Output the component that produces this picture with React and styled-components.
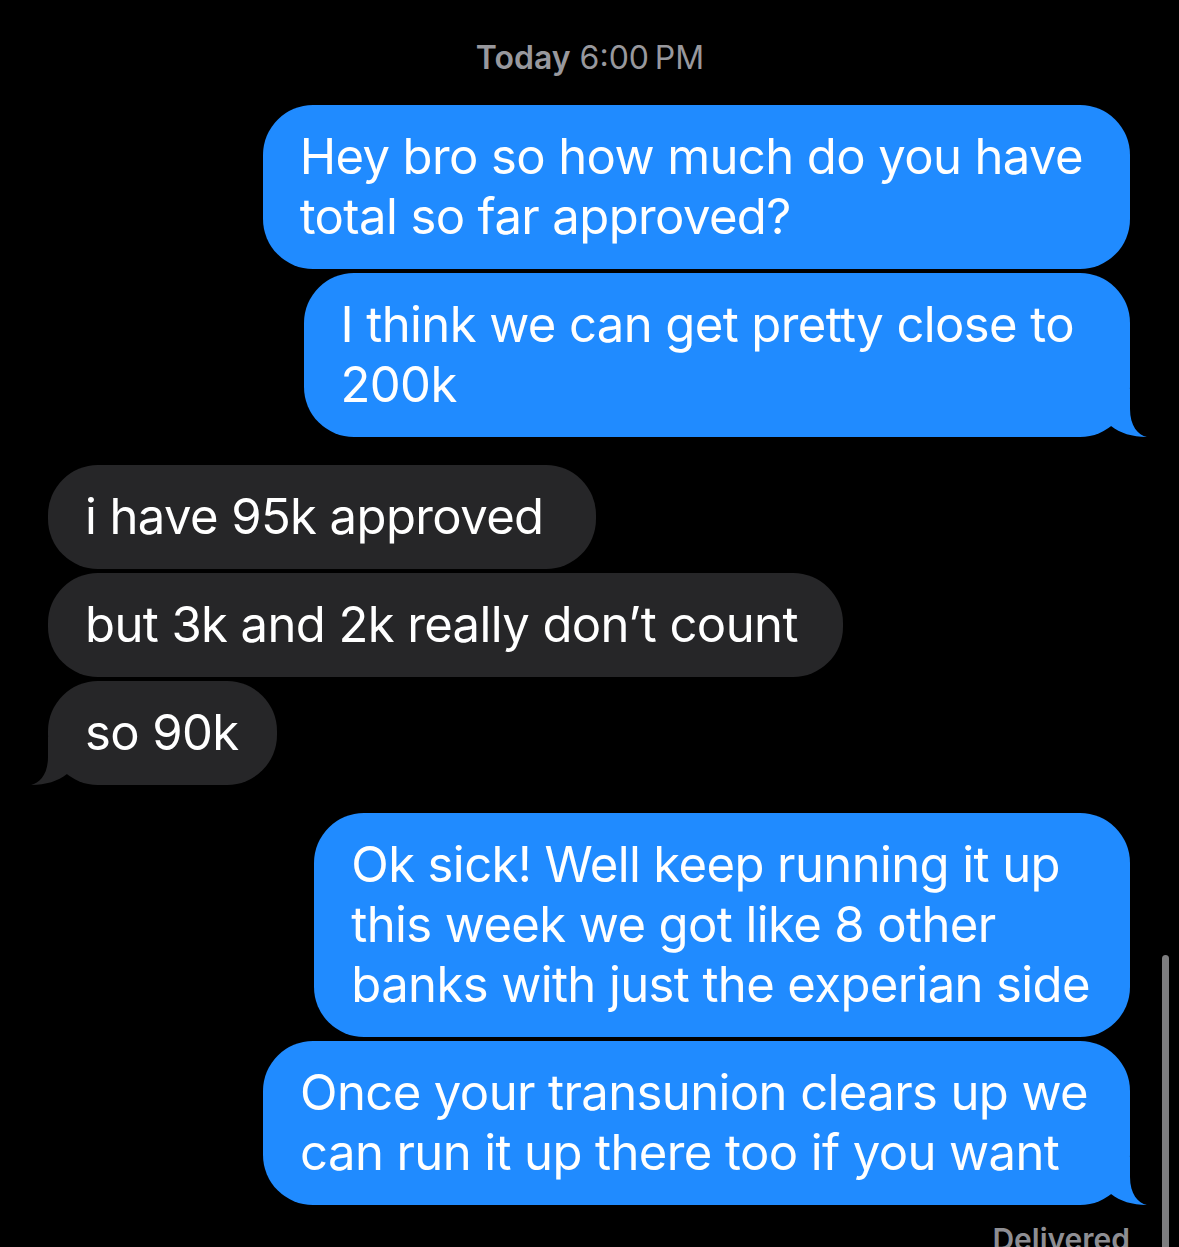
import React from "react";
import styled, { createGlobalStyle } from "styled-components";

const GlobalStyle = createGlobalStyle`
  html, body {
    margin: 0;
    padding: 0;
    background: #000;
  }
`;

const Screen = styled.div`
  position: relative;
  width: 1179px;
  height: 1247px;
  overflow: hidden;
  background: #000;
  font-family: Inter, "Liberation Sans", sans-serif;
  -webkit-font-smoothing: antialiased;
`;

const Thread = styled.div`
  display: flex;
  flex-direction: column;
  padding: 38px 49px 0 48px;
`;

const Stamp = styled.div`
  text-align: center;
  color: #98989d;
  font-size: 32px;
  line-height: 40px;
  margin-bottom: 27px;
  margin-left: 2px;

  b {
    font-weight: 600;
  }
`;

const Group = styled.div`
  display: flex;
  flex-direction: column;
  align-items: ${(p) => (p.$mine ? "flex-end" : "flex-start")};
  gap: 4px;
  margin-bottom: 28px;
`;

const Bubble = styled.div`
  position: relative;
  padding: 22px ${(p) => p.$padRight}px 22px 37px;
  border-radius: 50px;
  background: ${(p) => (p.$mine ? "#208bff" : "#262628")};
  color: #fff;
  font-size: 49px;
  line-height: 60px;
  letter-spacing: -0.6px;
  white-space: nowrap;
`;

const Tail = styled.svg`
  position: absolute;
  bottom: 0;
  width: 80px;
  height: 48px;
  ${(p) => (p.$mine ? "right: -19px;" : "left: -19px; transform: scaleX(-1);")}

  path {
    fill: ${(p) => (p.$mine ? "#208bff" : "#262628")};
  }
`;

const Delivered = styled.div`
  align-self: flex-end;
  margin-top: -12px;
  color: #8e8e93;
  font-size: 30px;
  font-weight: 600;
  line-height: 36px;
`;

const Scrollbar = styled.div`
  position: absolute;
  left: 1162px;
  top: 955px;
  width: 7px;
  height: 320px;
  border-radius: 4px;
  background: #7d7d7f;
`;

function BubbleTail({ mine }) {
  return (
    <Tail $mine={mine} viewBox="0 0 80 48" aria-hidden="true">
      <path d="M61 0 L61 20 C61 37 69 46 78 48 C63 48 51 44 42 37 L42 0 Z" />
    </Tail>
  );
}

const messages = [
  {
    mine: true,
    items: [
      { pad: 47, lines: ["Hey bro so how much do you have", "total so far approved?"] },
      { pad: 56, lines: ["I think we can get pretty close to", "200k"] },
    ],
  },
  {
    mine: false,
    items: [
      { pad: 52, lines: ["i have 95k approved"] },
      { pad: 45, lines: ["but 3k and 2k really don\u2019t count"] },
      { pad: 38, lines: ["so 90k"] },
    ],
  },
  {
    mine: true,
    items: [
      {
        pad: 40,
        lines: [
          "Ok sick! Well keep running it up",
          "this week we got like 8 other",
          "banks with just the experian side",
        ],
      },
      {
        pad: 42,
        lines: ["Once your transunion clears up we", "can run it up there too if you want"],
      },
    ],
  },
];

export default function App() {
  return (
    <Screen>
      <GlobalStyle />
      <Thread>
        <Stamp>
          <b>Today</b> 6:00&#8201;PM
        </Stamp>
        {messages.map((group, gi) => (
          <Group key={gi} $mine={group.mine}>
            {group.items.map((msg, i) => (
              <Bubble key={i} $mine={group.mine} $padRight={msg.pad}>
                {msg.lines.map((line, li) => (
                  <div key={li}>{line}</div>
                ))}
                {i === group.items.length - 1 && <BubbleTail mine={group.mine} />}
              </Bubble>
            ))}
          </Group>
        ))}
        <Delivered>Delivered</Delivered>
      </Thread>
      <Scrollbar />
    </Screen>
  );
}
